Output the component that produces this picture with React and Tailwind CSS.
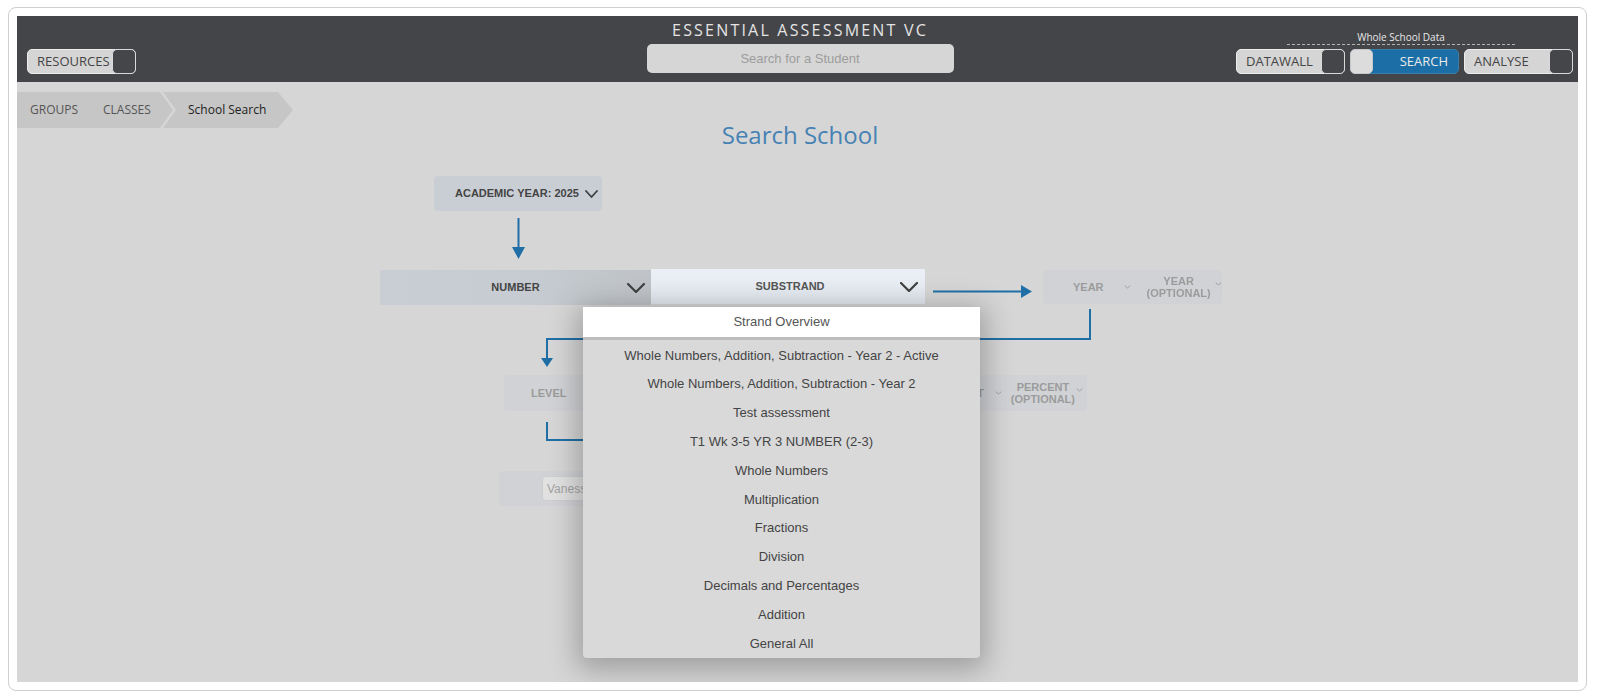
import React from 'react';

const OPEN = { fontFamily: '"Open Sans", "Noto Sans", sans-serif' };
const ARIAL = { fontFamily: '"Liberation Sans", Arial, sans-serif' };

const substrands = [
  'Whole Numbers, Addition, Subtraction - Year 2 - Active',
  'Whole Numbers, Addition, Subtraction - Year 2',
  'Test assessment',
  'T1 Wk 3-5 YR 3 NUMBER (2-3)',
  'Whole Numbers',
  'Multiplication',
  'Fractions',
  'Division',
  'Decimals and Percentages',
  'Addition',
  'General All',
];

const Chevron = ({ w = 18, h = 10, stroke = 2.2, color = '#3f3f3f' }) => (
  <svg width={w} height={h} viewBox={`0 0 ${w} ${h}`} className="shrink-0">
    <polyline
      points={`1,1 ${w / 2},${h - 1} ${w - 1},1`}
      fill="none"
      stroke={color}
      strokeWidth={stroke}
      strokeLinecap="round"
      strokeLinejoin="round"
    />
  </svg>
);

const SmallChevron = () => <Chevron w={7} h={4} stroke={1} color="#555" />;

const HeaderToggle = ({ label }) => (
  <div className="flex h-[25px] w-[109px] items-center justify-between rounded-[5px] border border-[#ececec] bg-[#d5d5d5] pl-[9px]">
    <span className="text-[13px] leading-none text-[#444]">{label}</span>
    <span className="-mr-px h-[25px] w-[24px] rounded-[5px] border border-[#d9d9d9] bg-[#45464a]" />
  </div>
);

export default function App() {
  return (
    <div className="min-h-screen bg-white pl-[8px] pt-[7px]">
      <div className="w-[1579px] h-[684px] rounded-[8px] border border-[#cfcfcf] p-[8px]">
        {/* Header */}
        <header
          className="grid h-[66px] grid-cols-[1fr_auto_1fr] bg-[#444549] pl-[10px] pr-[5px]"
          style={OPEN}
        >
          <div className="flex items-end pb-[8px]">
            <div className="flex h-[25px] w-[109px] items-center justify-between rounded-[5px] border border-[#ececec] bg-[#d5d5d5] pl-[9px]">
              <span className="text-[13px] leading-none text-[#444]">RESOURCES</span>
              <span className="-mr-px h-[25px] w-[24px] rounded-[5px] border border-[#d9d9d9] bg-[#45464a]" />
            </div>
          </div>

          <div className="flex flex-col items-center pt-[4px]">
            <div className="text-[16px] leading-[21px] tracking-[2.2px] text-[#e4e4e4]">
              ESSENTIAL ASSESSMENT VC
            </div>
            <div
              className="mt-[3px] flex h-[29px] w-[307px] items-center justify-center rounded-[5px] bg-[#d6d6d6] text-[13px] text-[#9d9d9d]"
              style={ARIAL}
            >
              Search for a Student
            </div>
          </div>

          <div className="flex flex-col items-end justify-end pb-[8px]">
            <div className="flex flex-col items-center">
              <div className="mr-[7px] flex w-[228px] flex-col items-center">
                <span className="text-[10px] leading-[12px] text-[#e8e8e8]">Whole School Data</span>
                <span className="mt-px w-full border-b border-dashed border-[#b5b5b5]" />
              </div>
              <div className="mt-[4px] flex gap-[5px]">
                <HeaderToggle label="DATAWALL" />
                <div className="flex h-[25px] w-[109px] items-center justify-between rounded-[5px] border border-[#3a7dab] bg-[#1b6fa6] pr-[10px]">
                  <span className="-ml-px h-[25px] w-[23px] rounded-[5px] border border-[#c8c8c8] bg-[#dcdcdc]" />
                  <span className="text-[13px] leading-none text-[#ececec]">SEARCH</span>
                </div>
                <HeaderToggle label="ANALYSE" />
              </div>
            </div>
          </div>
        </header>

        {/* Main */}
        <main className="relative h-[600px] overflow-hidden bg-[#d6d6d6]">
          {/* Breadcrumb */}
          <nav className="mt-[10px] flex h-[36px] text-[12px]" style={OPEN}>
            <div className="flex h-full w-[156px] items-center bg-[#c6c6c6] pl-[13px] text-[#555] [clip-path:polygon(0_0,143px_0,156px_50%,143px_100%,0_100%)]">
              <span>GROUPS</span>
              <span className="ml-[25px]">CLASSES</span>
            </div>
            <div className="-ml-[10px] flex h-full w-[130px] items-center bg-[#c6c6c6] pl-[25px] text-[#222] [clip-path:polygon(0_0,115px_0,130px_50%,115px_100%,0_100%,13px_50%)]">
              School Search
            </div>
          </nav>

          <h1
            className="-mt-[9px] ml-[5px] text-center text-[24px] leading-[32px] font-normal text-[#4682b4]"
            style={OPEN}
          >
            Search School
          </h1>

          {/* Flow diagram */}
          <div className="relative h-[531px]" style={ARIAL}>
            {/* Academic year */}
            <div className="absolute left-[417px] top-[25px] flex h-[35px] w-[168px] items-center rounded-[4px] bg-[#c9ced5] pl-[21px] pr-[4px]">
              <span className="whitespace-nowrap text-[11px] font-bold text-[#444]">ACADEMIC YEAR: 2025</span>
              <span className="ml-[6px]">
                <Chevron w={13} h={8} stroke={1.8} />
              </span>
            </div>

            <svg className="absolute left-[495px] top-[67px]" width="13" height="41" viewBox="0 0 13 41">
              <line x1="6.5" y1="0" x2="6.5" y2="31" stroke="#1f6fa6" strokeWidth="2" />
              <polygon points="0,29 13,29 6.5,41" fill="#1f6fa6" />
            </svg>

            {/* Strand / substrand */}
            <div className="absolute left-[363px] top-[118px] flex">
              <div className="relative mt-px flex h-[35px] w-[271px] items-center justify-center bg-gradient-to-r from-[#c9ced5] via-[#c7ccd2] to-[#bfc3c7]">
                <span className="text-[11px] font-bold text-[#444]">NUMBER</span>
                <span className="absolute right-[6px] top-[13px]">
                  <Chevron />
                </span>
              </div>
              <div className="relative flex h-[35px] w-[274px] items-center justify-center bg-gradient-to-b from-[#ebf0f6] to-[#e3e9f0]">
                <span className="ml-[4px] text-[11px] font-bold text-[#555]">SUBSTRAND</span>
                <span className="absolute right-[7px] top-[13px]">
                  <Chevron />
                </span>
              </div>
            </div>

            <svg className="absolute left-[916px] top-[134px]" width="99" height="13" viewBox="0 0 99 13">
              <line x1="0" y1="6.5" x2="90" y2="6.5" stroke="#1f6fa6" strokeWidth="2" />
              <polygon points="88,0 99,6.5 88,13" fill="#1f6fa6" />
            </svg>

            {/* Year (faded) */}
            <div className="absolute left-[1026px] top-[119px] flex h-[34px] w-[179px] items-center rounded-[4px] bg-[#c9ced5] pl-[30px] text-[11px] font-bold leading-[12px] text-[#444] opacity-40">
              <span>YEAR</span>
              <span className="ml-[20px]">
                <SmallChevron />
              </span>
              <span className="ml-[16px] text-center">
                YEAR
                <br />
                (OPTIONAL)
              </span>
              <span className="ml-[4px] -mt-[6px]">
                <SmallChevron />
              </span>
            </div>

            {/* connector year -> level */}
            <svg className="absolute left-[523px] top-[158px]" width="552" height="60" viewBox="0 0 552 60">
              <path d="M550 0 V30 H7 V51" fill="none" stroke="#1f6fa6" strokeWidth="2" />
              <polygon points="1,49 13,49 7,58" fill="#1f6fa6" />
            </svg>

            {/* Level row (faded) */}
            <div className="absolute left-[487px] top-[224px] flex h-[36px] w-[583px] items-center justify-between rounded-[4px] bg-[#c9ced5] pl-[27px] pr-[4px] text-[11px] font-bold leading-[12px] text-[#444] opacity-40">
              <span>LEVEL</span>
              <div className="flex items-center">
                <span>PERCENT</span>
                <span className="ml-[11px]">
                  <SmallChevron />
                </span>
                <span className="ml-[9px] text-center">
                  PERCENT
                  <br />
                  (OPTIONAL)
                </span>
                <span className="ml-[1px] -mt-[6px]">
                  <SmallChevron />
                </span>
              </div>
            </div>

            <svg className="absolute left-[523px] top-[271px]" width="200" height="20" viewBox="0 0 200 20">
              <path d="M7 0 V18 H200" fill="none" stroke="#1f6fa6" strokeWidth="2" />
            </svg>

            {/* Student box (faded) */}
            <div className="absolute left-[482px] top-[320px] flex h-[35px] w-[300px] items-center rounded-[4px] bg-[#c9ced5] pl-[43px] opacity-40">
              <div className="flex h-[25px] w-[200px] items-center rounded-[4px] border border-[#c4c4c4] bg-[#f2f2f2] pl-[4px] text-[12px] text-[#555]">
                Vanessa
              </div>
            </div>

            {/* Substrand dropdown */}
            <div className="absolute left-[566px] top-[156px] w-[397px] rounded-b-[4px] bg-[#d9d9d9] shadow-[0_6px_28px_6px_rgba(0,0,0,0.26)]">
              <div className="flex h-[30px] items-center justify-center bg-white text-[13px] text-[#555]">
                Strand Overview
              </div>
              <div className="h-[3px] bg-[#bdbdbd]" />
              <ul className="pt-px">
                {substrands.map((s) => (
                  <li
                    key={s}
                    className="flex h-[28.8px] items-center justify-center text-[13px] text-[#444]"
                  >
                    {s}
                  </li>
                ))}
              </ul>
            </div>
          </div>
        </main>
      </div>
    </div>
  );
}
